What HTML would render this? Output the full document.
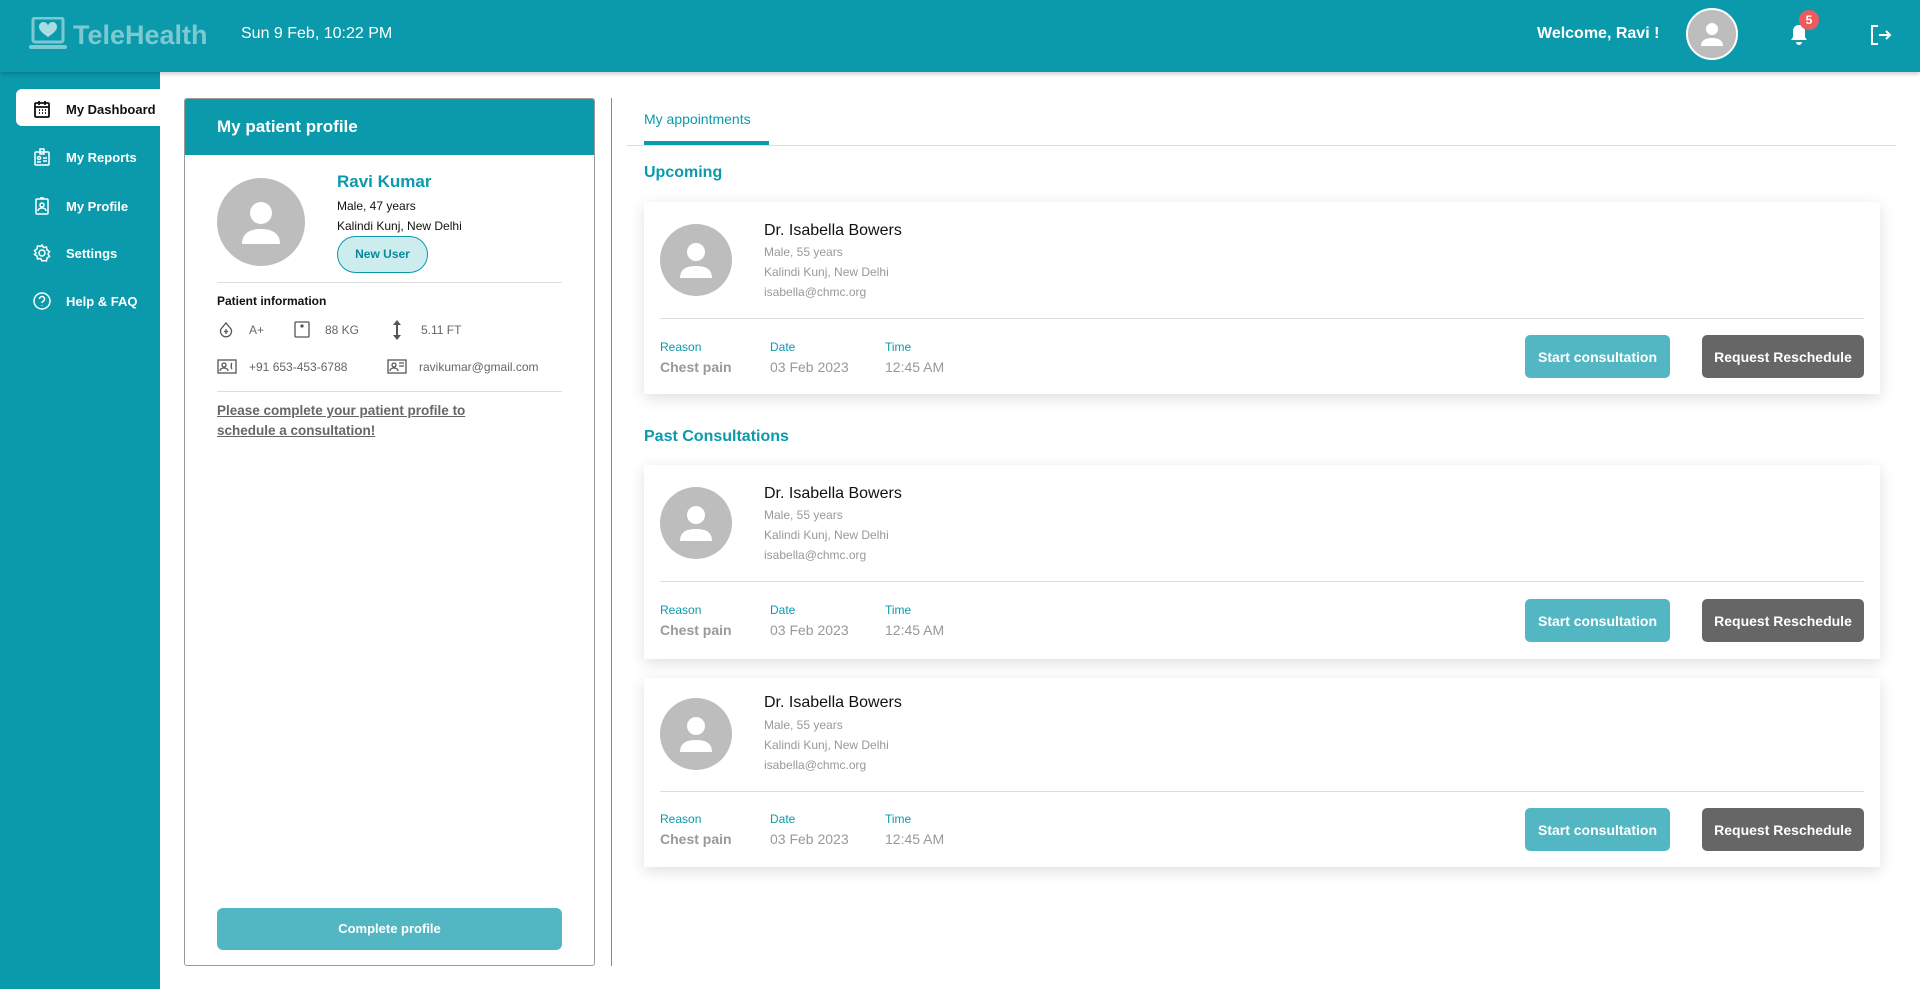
<!DOCTYPE html>
<html><head><meta charset="utf-8"><style>
*{box-sizing:border-box;margin:0;padding:0}
body{width:1920px;height:989px;overflow:hidden;background:#fff;font-family:"Liberation Sans",sans-serif;position:relative}
.abs{position:absolute}
.hdr{left:0;top:0;width:1920px;height:72px;background:#0a9aab;box-shadow:0 2px 4px rgba(0,0,0,.2);z-index:2}
.side{left:0;top:72px;width:160px;height:917px;background:#0a9aab}
.nav{position:absolute;left:32px;color:#fff;font-size:13px;font-weight:bold;display:flex;align-items:center;gap:14px}
.nav svg{width:20px;height:20px}
.active{left:16px;top:89px;width:144px;height:37px;background:#fff;border-radius:6px 0 0 6px}
.pcard{left:184px;top:98px;width:411px;height:868px;border:1px solid #9a9a9a;border-radius:3px;overflow:hidden}
.pch{height:56px;background:#0a9aab;color:#fff;font-weight:bold;font-size:17px;padding:18px 0 0 32px}
.avatar{position:absolute;border-radius:50%;background:#bdbdbd;overflow:hidden}
.card{position:absolute;left:644px;width:1236px;background:#fff;box-shadow:0 4px 14px rgba(0,0,0,.13)}
.card .nm{position:absolute;left:120px;top:20px;font-size:16px;color:#111}
.card .sub{position:absolute;left:120px;font-size:12px;color:#999}
.card .hr{position:absolute;left:16px;right:16px;height:1px;background:#ddd}
.lab{position:absolute;font-size:12px;color:#0a9aab}
.val{position:absolute;font-size:14px;color:#999}
.btn{position:absolute;height:43px;border-radius:5px;color:#fff;font-size:14px;font-weight:bold;display:flex;align-items:center;justify-content:center}
.sec{position:absolute;left:644px;font-size:16px;font-weight:bold;color:#0a9aab}
</style></head><body>
<div class="abs hdr">
 <svg class="abs" style="left:29px;top:17px" width="40" height="34" viewBox="0 0 40 34"><rect x="4" y="1" width="30" height="24" rx="2" fill="none" stroke="#7cc9d2" stroke-width="3"/><path d="M19 20c-6-4-9-7-9-10a4 4 0 0 1 9-1a4 4 0 0 1 9 1c0 3-3 6-9 10z" fill="#a8dde3"/><rect x="0" y="28" width="38" height="4" rx="2" fill="#7cc9d2"/></svg>
 <div class="abs" style="left:73px;top:20px;font-size:27px;font-weight:bold;color:#7cc9d2">TeleHealth</div>
 <div class="abs" style="left:241px;top:25px;font-size:16px;color:#fff">Sun 9 Feb, 10:22 PM</div>
 <div class="abs" style="left:1537px;top:25px;font-size:16px;font-weight:bold;color:#fff">Welcome, Ravi !</div>
 <div class="avatar" style="left:1686px;top:8px;width:52px;height:52px;border:2px solid #fff"><svg width="48" height="48" viewBox="0 0 48 48"><circle cx="24" cy="19" r="6" fill="#fff"/><path d="M13 36c0-6 5-8 11-8s11 2 11 8z" fill="#fff"/></svg></div>
 <svg class="abs" style="left:1789px;top:24px" width="20" height="22" viewBox="0 0 20 22"><path d="M10 1c-4 0-6 3-6 6v6l-2 3h16l-2-3V7c0-3-2-6-6-6zM7 18a3 3 0 0 0 6 0z" fill="#fff"/></svg>
 <div class="abs" style="left:1799px;top:10px;width:20px;height:20px;border-radius:50%;background:#f05a5a;color:#fff;font-size:12px;font-weight:bold;text-align:center;line-height:20px">5</div>
 <svg class="abs" style="left:1870px;top:24px" width="22" height="22" viewBox="0 0 22 22" fill="none" stroke="#fff" stroke-width="2"><path d="M8 2H2v18h6M9 11h11M16 7l4 4-4 4"/></svg>
</div>
<div class="abs side"></div>
<div class="abs active"></div>
<div class="nav" style="top:99px;color:#111"><svg viewBox="0 0 20 20" fill="none" stroke="#111" stroke-width="1.8"><rect x="3" y="4" width="14" height="14" rx="1"/><path d="M3 8h14M7 2v4M13 2v4M7 11h1M10 11h1M13 11h1M7 14h1M10 14h1M13 14h1"/></svg>My Dashboard</div>
<div class="nav" style="top:147px"><svg viewBox="0 0 20 20" fill="none" stroke="#fff" stroke-width="1.5"><rect x="3" y="5" width="14" height="13" rx="1"/><rect x="8" y="2" width="4" height="5"/><circle cx="7" cy="11" r="1.5"/><path d="M5 15h4M11 11h4M11 14h4"/></svg>My Reports</div>
<div class="nav" style="top:196px"><svg viewBox="0 0 20 20" fill="none" stroke="#fff" stroke-width="1.5"><rect x="4" y="3" width="12" height="15" rx="1"/><circle cx="10" cy="9" r="2"/><path d="M6 15c0-2 2-3 4-3s4 1 4 3M8 2h4"/></svg>My Profile</div>
<div class="nav" style="top:243px"><svg viewBox="0 0 20 20" fill="none" stroke="#fff" stroke-width="1.5"><circle cx="10" cy="10" r="3"/><path d="M10 2l1.5 2.5 3-.5.5 3 2.5 1.5-1.5 2.5 1.5 2.5-2.5 1.5-.5 3-3-.5L10 18l-1.5-2.5-3 .5-.5-3L2.5 11.5 4 10 2.5 7.5 5 6l.5-3 3 .5z"/></svg>Settings</div>
<div class="nav" style="top:291px"><svg viewBox="0 0 20 20" fill="none" stroke="#fff" stroke-width="1.5"><circle cx="10" cy="10" r="8"/><path d="M7.5 8a2.5 2.5 0 1 1 3.5 2.3c-.7.4-1 .9-1 1.7M10 14.5v.5"/></svg>Help &amp; FAQ</div>

<div class="abs pcard">
 <div class="pch">My patient profile</div>
 <div class="avatar" style="left:32px;top:79px;width:88px;height:88px"><svg width="88" height="88" viewBox="0 0 88 88"><circle cx="44" cy="35" r="11" fill="#fff"/><path d="M25 66c0-12 10-15 19-15s19 3 19 15z" fill="#fff"/></svg></div>
 <div class="abs" style="left:152px;top:73px;font-size:17px;font-weight:bold;color:#0a9aab">Ravi Kumar</div>
 <div class="abs" style="left:152px;top:100px;font-size:12px;color:#111">Male, 47 years</div>
 <div class="abs" style="left:152px;top:120px;font-size:12px;color:#111">Kalindi Kunj, New Delhi</div>
 <div class="abs" style="left:152px;top:137px;width:91px;height:37px;border:1px solid #0a9aab;border-radius:19px;background:#cdecee;color:#0a8a99;font-size:12px;font-weight:bold;text-align:center;line-height:35px">New User</div>
 <div class="abs" style="left:32px;top:183px;width:345px;height:1px;background:#ddd"></div>
 <div class="abs" style="left:32px;top:195px;font-size:12px;font-weight:bold;color:#111">Patient information</div>
 <svg class="abs" style="left:32px;top:222px" width="18" height="18" viewBox="0 0 18 18" fill="none" stroke="#555" stroke-width="1.3"><path d="M9 2l5 6a5.5 5.5 0 1 1-10 0z"/><path d="M9 8v5M7 10.5h4"/></svg>
 <div class="abs" style="left:64px;top:224px;font-size:12px;color:#666">A+</div>
 <svg class="abs" style="left:109px;top:222px" width="16" height="17" viewBox="0 0 16 17" fill="none" stroke="#555" stroke-width="1.3"><rect x="1" y="1" width="14" height="15" rx="1"/><circle cx="8" cy="5" r="1" fill="#555"/></svg>
 <div class="abs" style="left:140px;top:224px;font-size:12px;color:#666">88 KG</div>
 <svg class="abs" style="left:207px;top:221px" width="10" height="20" viewBox="0 0 10 20" fill="#555"><path d="M5 0l4 5H6v10h3l-4 5-4-5h3V5H1z"/></svg>
 <div class="abs" style="left:236px;top:224px;font-size:12px;color:#666">5.11 FT</div>
 <svg class="abs" style="left:32px;top:260px" width="20" height="15" viewBox="0 0 20 15" fill="none" stroke="#555" stroke-width="1.3"><rect x="1" y="1" width="18" height="13"/><circle cx="7" cy="6" r="2"/><path d="M3 12c0-2 2-3 4-3s4 1 4 3M15 4c-1 1-1 5 0 6"/></svg>
 <div class="abs" style="left:64px;top:261px;font-size:12px;color:#666">+91 653-453-6788</div>
 <svg class="abs" style="left:202px;top:260px" width="20" height="15" viewBox="0 0 20 15" fill="none" stroke="#555" stroke-width="1.3"><rect x="1" y="1" width="18" height="13"/><circle cx="7" cy="6" r="2"/><path d="M3 12c0-2 2-3 4-3s4 1 4 3M12 4h5M12 7h5"/></svg>
 <div class="abs" style="left:234px;top:261px;font-size:12px;color:#666">ravikumar@gmail.com</div>
 <div class="abs" style="left:32px;top:292px;width:345px;height:1px;background:#ddd"></div>
 <div class="abs" style="left:32px;top:302px;width:285px;font-size:13.5px;font-weight:bold;color:#666;text-decoration:underline;line-height:20px">Please complete your patient profile to schedule a consultation!</div>
 <div class="abs" style="left:32px;top:809px;width:345px;height:42px;border-radius:6px;background:#52b7c3;color:#fff;font-size:13px;font-weight:bold;text-align:center;line-height:42px">Complete profile</div>
</div>
<div class="abs" style="left:611px;top:98px;width:1px;height:868px;background:#888"></div>
<div class="abs" style="left:644px;top:111px;font-size:14px;color:#0a9aab">My appointments</div>
<div class="abs" style="left:627px;top:145px;width:1269px;height:1px;background:#ddd"></div>
<div class="abs" style="left:644px;top:141px;width:125px;height:4px;background:#0a9aab"></div>
<div class="sec" style="top:164px">Upcoming</div>
<div class="sec" style="top:428px">Past Consultations</div>

<div class="card" style="top:202px;height:192px">
 <div class="avatar" style="left:16px;top:22px;width:72px;height:72px"><svg width="72" height="72" viewBox="0 0 72 72"><circle cx="36" cy="28" r="9" fill="#fff"/><path d="M20 54c0-10 8-12 16-12s16 2 16 12z" fill="#fff"/></svg></div>
 <div class="nm">Dr. Isabella Bowers</div><div class="sub" style="top:43px">Male, 55 years</div><div class="sub" style="top:63px">Kalindi Kunj, New Delhi</div><div class="sub" style="top:83px">isabella@chmc.org</div>
 <div class="hr" style="top:116px"></div>
 <div class="lab" style="left:16px;top:138px">Reason</div><div class="lab" style="left:126px;top:138px">Date</div><div class="lab" style="left:241px;top:138px">Time</div>
 <div class="val" style="left:16px;top:157px;font-weight:bold">Chest pain</div><div class="val" style="left:126px;top:157px">03 Feb 2023</div><div class="val" style="left:241px;top:157px">12:45 AM</div>
 <div class="btn" style="left:881px;top:133px;width:145px;background:#52b7c3">Start consultation</div>
 <div class="btn" style="left:1058px;top:133px;width:162px;background:#666">Request Reschedule</div>
</div>
<div class="card" style="top:465px;height:194px">
 <div class="avatar" style="left:16px;top:22px;width:72px;height:72px"><svg width="72" height="72" viewBox="0 0 72 72"><circle cx="36" cy="28" r="9" fill="#fff"/><path d="M20 54c0-10 8-12 16-12s16 2 16 12z" fill="#fff"/></svg></div>
 <div class="nm">Dr. Isabella Bowers</div><div class="sub" style="top:43px">Male, 55 years</div><div class="sub" style="top:63px">Kalindi Kunj, New Delhi</div><div class="sub" style="top:83px">isabella@chmc.org</div>
 <div class="hr" style="top:116px"></div>
 <div class="lab" style="left:16px;top:138px">Reason</div><div class="lab" style="left:126px;top:138px">Date</div><div class="lab" style="left:241px;top:138px">Time</div>
 <div class="val" style="left:16px;top:157px;font-weight:bold">Chest pain</div><div class="val" style="left:126px;top:157px">03 Feb 2023</div><div class="val" style="left:241px;top:157px">12:45 AM</div>
 <div class="btn" style="left:881px;top:134px;width:145px;background:#52b7c3">Start consultation</div>
 <div class="btn" style="left:1058px;top:134px;width:162px;background:#666">Request Reschedule</div>
</div>
<div class="card" style="top:678px;height:189px">
 <div class="avatar" style="left:16px;top:20px;width:72px;height:72px"><svg width="72" height="72" viewBox="0 0 72 72"><circle cx="36" cy="28" r="9" fill="#fff"/><path d="M20 54c0-10 8-12 16-12s16 2 16 12z" fill="#fff"/></svg></div>
 <div class="nm" style="top:16px">Dr. Isabella Bowers</div><div class="sub" style="top:40px">Male, 55 years</div><div class="sub" style="top:60px">Kalindi Kunj, New Delhi</div><div class="sub" style="top:80px">isabella@chmc.org</div>
 <div class="hr" style="top:113px"></div>
 <div class="lab" style="left:16px;top:134px">Reason</div><div class="lab" style="left:126px;top:134px">Date</div><div class="lab" style="left:241px;top:134px">Time</div>
 <div class="val" style="left:16px;top:153px;font-weight:bold">Chest pain</div><div class="val" style="left:126px;top:153px">03 Feb 2023</div><div class="val" style="left:241px;top:153px">12:45 AM</div>
 <div class="btn" style="left:881px;top:130px;width:145px;background:#52b7c3">Start consultation</div>
 <div class="btn" style="left:1058px;top:130px;width:162px;background:#666">Request Reschedule</div>
</div>
</body></html>
